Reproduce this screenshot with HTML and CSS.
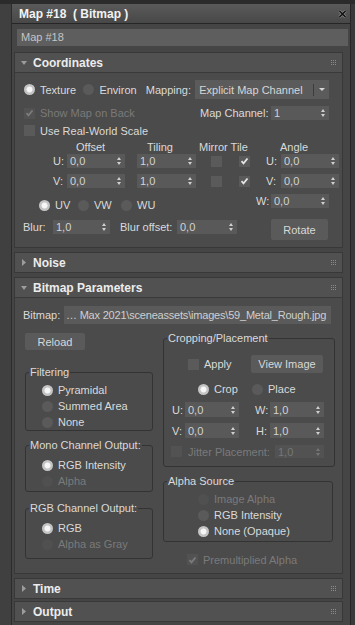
FILE: index.html
```html
<!doctype html>
<html lang="en">
<head>
    <meta charset="UTF-8">
    <meta name="viewport" content="width=device-width, initial-scale=1.0">
    <title>Map #18 ( Bitmap )</title>
    <link rel="stylesheet" href="styles.css">
</head>
<body>
<div class="topline"></div>
<div class="desk">
    <div class="side"></div>
    <div class="win">
        <!-- title bar -->
        <div class="title">
            <span>Map #18&nbsp; ( Bitmap )</span>
            <svg class="close" width="9" height="8" viewBox="0 0 9 8">
                <path d="M1.5 1 L7.5 7 M7.5 1 L1.5 7" stroke="#8a8a8a" stroke-width="3"/>
                <path d="M1.5 1 L7.5 7 M7.5 1 L1.5 7" stroke="#111" stroke-width="1.6"/>
            </svg>
        </div>
        <div class="name">Map #18</div>

        <div class="rollouts">
            <div class="rolls">

                <!-- Coordinates -->
                <div class="roll">
                    <div class="roll-head">
                        <svg class="tri" width="6" height="4" viewBox="0 0 6 4"><polygon points="0,0 6,0 3,4" fill="#9c9c9c"/></svg>
                        <span class="roll-name">Coordinates</span>
                        <svg class="grip" width="5" height="5" viewBox="0 0 5 5" fill="#8c8c8c"><rect x="0" y="0" width="1" height="1"/><rect x="2" y="0" width="1" height="1"/><rect x="4" y="0" width="1" height="1"/><rect x="0" y="2" width="1" height="1"/><rect x="2" y="2" width="1" height="1"/><rect x="4" y="2" width="1" height="1"/><rect x="0" y="4" width="1" height="1"/><rect x="2" y="4" width="1" height="1"/><rect x="4" y="4" width="1" height="1"/></svg>
                    </div>
                    <div class="roll-body coords">
                        <div class="row row-a">
                            <div class="opt w-texture"><span class="radio on"></span>Texture</div>
                            <div class="opt w-environ"><span class="radio"></span>Environ</div>
                            <span class="lbl w-mapping">Mapping:</span>
                            <div class="drop">
                                <span>Explicit Map Channel</span>
                                <span class="drop-sep"></span>
                                <span class="drop-arr"></span>
                            </div>
                        </div>
                        <div class="row row-b">
                            <div class="opt w-showmap dis">
                                <span class="check dis"><svg width="9" height="8" viewBox="0 0 9 8"><polyline points="1.5,4.2 3.5,6.3 7.5,1.5" fill="none" stroke="#7c7c7c" stroke-width="1.8"/></svg></span>Show Map on Back
                            </div>
                            <span class="lbl w-mapch">Map Channel:</span>
                            <div class="spin w58"><span>1</span><span class="arr"></span></div>
                        </div>
                        <div class="row row-c">
                            <div class="opt"><span class="check"></span>Use Real-World Scale</div>
                        </div>
                        <div class="row row-d">
                            <span class="w-offset">Offset</span>
                            <span class="w-tiling">Tiling</span>
                            <span class="w-mirror">Mirror Tile</span>
                            <span>Angle</span>
                        </div>
                        <div class="row row-uv">
                            <span class="axis">U:</span>
                            <div class="spin w58"><span>0,0</span><span class="arr"></span></div>
                            <div class="spin w59 ml12"><span>1,0</span><span class="arr"></span></div>
                            <span class="check ml15"></span>
                            <span class="check ml12"><svg width="9" height="8" viewBox="0 0 9 8"><polyline points="1.5,4.2 3.5,6.3 7.5,1.5" fill="none" stroke="#e4e4e4" stroke-width="1.8"/></svg></span>
                            <span class="axis ml11 w15">U:</span>
                            <div class="spin w58"><span>0,0</span><span class="arr"></span></div>
                        </div>
                        <div class="row row-uv mt6">
                            <span class="axis">V:</span>
                            <div class="spin w58"><span>0,0</span><span class="arr"></span></div>
                            <div class="spin w59 ml12"><span>1,0</span><span class="arr"></span></div>
                            <span class="check ml15"></span>
                            <span class="check ml12"><svg width="9" height="8" viewBox="0 0 9 8"><polyline points="1.5,4.2 3.5,6.3 7.5,1.5" fill="none" stroke="#e4e4e4" stroke-width="1.8"/></svg></span>
                            <span class="axis ml11 w15">V:</span>
                            <div class="spin w58"><span>0,0</span><span class="arr"></span></div>
                        </div>
                        <div class="row row-g">
                            <div class="opt low w-uv"><span class="radio on"></span>UV</div>
                            <div class="opt low w-vw"><span class="radio"></span>VW</div>
                            <div class="opt low"><span class="radio"></span>WU</div>
                            <div class="wgroup">
                                <span class="axis w15">W:</span>
                                <div class="spin w58"><span>0,0</span><span class="arr"></span></div>
                            </div>
                        </div>
                        <div class="row row-h">
                            <span class="lbl w-blur">Blur:</span>
                            <div class="spin w57 mt1"><span>1,0</span><span class="arr"></span></div>
                            <span class="lbl w-bluroff">Blur offset:</span>
                            <div class="spin w60 mt1"><span>0,0</span><span class="arr"></span></div>
                            <div class="btn rotate">Rotate</div>
                        </div>
                    </div>
                </div>

                <!-- Noise -->
                <div class="roll">
                    <div class="roll-head">
                        <svg class="tri" width="6" height="7" viewBox="0 0 6 7"><polygon points="1,0 5,3.5 1,7" fill="#9c9c9c"/></svg>
                        <span class="roll-name">Noise</span>
                        <svg class="grip" width="5" height="5" viewBox="0 0 5 5" fill="#8c8c8c"><rect x="0" y="0" width="1" height="1"/><rect x="2" y="0" width="1" height="1"/><rect x="4" y="0" width="1" height="1"/><rect x="0" y="2" width="1" height="1"/><rect x="2" y="2" width="1" height="1"/><rect x="4" y="2" width="1" height="1"/><rect x="0" y="4" width="1" height="1"/><rect x="2" y="4" width="1" height="1"/><rect x="4" y="4" width="1" height="1"/></svg>
                    </div>
                </div>

                <!-- Bitmap Parameters -->
                <div class="roll">
                    <div class="roll-head">
                        <svg class="tri" width="6" height="4" viewBox="0 0 6 4"><polygon points="0,0 6,0 3,4" fill="#9c9c9c"/></svg>
                        <span class="roll-name">Bitmap Parameters</span>
                        <svg class="grip" width="5" height="5" viewBox="0 0 5 5" fill="#8c8c8c"><rect x="0" y="0" width="1" height="1"/><rect x="2" y="0" width="1" height="1"/><rect x="4" y="0" width="1" height="1"/><rect x="0" y="2" width="1" height="1"/><rect x="2" y="2" width="1" height="1"/><rect x="4" y="2" width="1" height="1"/><rect x="0" y="4" width="1" height="1"/><rect x="2" y="4" width="1" height="1"/><rect x="4" y="4" width="1" height="1"/></svg>
                    </div>
                    <div class="roll-body bitmap">
                        <div class="row row-file">
                            <span class="lbl w-bitmap">Bitmap:</span>
                            <div class="file">… Max 2021\sceneassets\images\59_Metal_Rough.jpg</div>
                        </div>
                        <div class="cols">
                            <div class="col-left">
                                <div class="btn reload">Reload</div>
                                <fieldset class="group filtering">
                                    <legend>Filtering</legend>
                                    <div class="opt line"><span class="radio on"></span>Pyramidal</div>
                                    <div class="opt line"><span class="radio"></span>Summed Area</div>
                                    <div class="opt line"><span class="radio"></span>None</div>
                                </fieldset>
                                <fieldset class="group mono">
                                    <legend>Mono Channel Output:</legend>
                                    <div class="opt line"><span class="radio on"></span>RGB Intensity</div>
                                    <div class="opt line dis"><span class="radio dis"></span>Alpha</div>
                                </fieldset>
                                <fieldset class="group rgb">
                                    <legend>RGB Channel Output:</legend>
                                    <div class="opt line"><span class="radio on"></span>RGB</div>
                                    <div class="opt line dis"><span class="radio dis"></span>Alpha as Gray</div>
                                </fieldset>
                            </div>
                            <div class="col-right">
                                <fieldset class="group crop">
                                    <legend>Cropping/Placement</legend>
                                    <div class="row row-apply">
                                        <div class="opt w-apply"><span class="check"></span>Apply</div>
                                        <div class="btn view">View Image</div>
                                    </div>
                                    <div class="row row-crop">
                                        <div class="opt w-crop"><span class="radio on"></span>Crop</div>
                                        <div class="opt"><span class="radio"></span>Place</div>
                                    </div>
                                    <div class="row row-cuv">
                                        <span class="axis small w13">U:</span>
                                        <div class="spin w54 h15"><span>0,0</span><span class="arr"></span></div>
                                        <span class="axis small w15 ml16">W:</span>
                                        <div class="spin w54 h15"><span>1,0</span><span class="arr"></span></div>
                                    </div>
                                    <div class="row row-cuv mt6">
                                        <span class="axis small w13">V:</span>
                                        <div class="spin w54 h15"><span>0,0</span><span class="arr"></span></div>
                                        <span class="axis small w15 ml16">H:</span>
                                        <div class="spin w54 h15"><span>1,0</span><span class="arr"></span></div>
                                    </div>
                                    <div class="row row-jitter">
                                        <span class="check dis"></span>
                                        <span class="lbl dis w-jitter">Jitter Placement:</span>
                                        <div class="spin dis w49 h13"><span>1,0</span><span class="arr"></span></div>
                                    </div>
                                </fieldset>
                                <fieldset class="group alpha">
                                    <legend>Alpha Source</legend>
                                    <div class="opt line dis"><span class="radio dis"></span>Image Alpha</div>
                                    <div class="opt line"><span class="radio"></span>RGB Intensity</div>
                                    <div class="opt line"><span class="radio on"></span>None (Opaque)</div>
                                </fieldset>
                                <div class="row row-premult">
                                    <div class="opt dis">
                                        <span class="check dis"><svg width="9" height="8" viewBox="0 0 9 8"><polyline points="1.5,4.2 3.5,6.3 7.5,1.5" fill="none" stroke="#7c7c7c" stroke-width="1.8"/></svg></span>Premultiplied Alpha
                                    </div>
                                </div>
                            </div>
                        </div>
                    </div>
                </div>

                <!-- Time -->
                <div class="roll short">
                    <div class="roll-head">
                        <svg class="tri" width="6" height="7" viewBox="0 0 6 7"><polygon points="1,0 5,3.5 1,7" fill="#9c9c9c"/></svg>
                        <span class="roll-name">Time</span>
                        <svg class="grip" width="5" height="5" viewBox="0 0 5 5" fill="#8c8c8c"><rect x="0" y="0" width="1" height="1"/><rect x="2" y="0" width="1" height="1"/><rect x="4" y="0" width="1" height="1"/><rect x="0" y="2" width="1" height="1"/><rect x="2" y="2" width="1" height="1"/><rect x="4" y="2" width="1" height="1"/><rect x="0" y="4" width="1" height="1"/><rect x="2" y="4" width="1" height="1"/><rect x="4" y="4" width="1" height="1"/></svg>
                    </div>
                </div>

                <!-- Output -->
                <div class="roll">
                    <div class="roll-head">
                        <svg class="tri" width="6" height="7" viewBox="0 0 6 7"><polygon points="1,0 5,3.5 1,7" fill="#9c9c9c"/></svg>
                        <span class="roll-name">Output</span>
                        <svg class="grip" width="5" height="5" viewBox="0 0 5 5" fill="#8c8c8c"><rect x="0" y="0" width="1" height="1"/><rect x="2" y="0" width="1" height="1"/><rect x="4" y="0" width="1" height="1"/><rect x="0" y="2" width="1" height="1"/><rect x="2" y="2" width="1" height="1"/><rect x="4" y="2" width="1" height="1"/><rect x="0" y="4" width="1" height="1"/><rect x="2" y="4" width="1" height="1"/><rect x="4" y="4" width="1" height="1"/></svg>
                    </div>
                </div>

            </div>
        </div>
    </div>
    <div class="side-r"></div>
</div>
</body>
</html>
```

FILE: styles.css
```css
* {
    margin: 0;
    padding: 0;
    box-sizing: border-box;
}

body {
    width: 355px;
    height: 625px;
    overflow: hidden;
    background: #3c3c3c;
    font: 11px "Liberation Sans", Arial, sans-serif;
    color: #dadada;
}

.topline {
    height: 4px;
    background: #2b2b2b;
}

.desk {
    display: flex;
    height: 621px;
}

.side {
    width: 12px;
    background: #404040;
    border-right: 1px solid #2c2c2c;
}

.side-r {
    width: 5px;
    background: #3a3a3a;
    border-left: 1px solid #262626;
}

.win {
    width: 338px;
    background: #454545;
}

/* title bar */
.title {
    height: 20px;
    display: flex;
    align-items: center;
    padding-left: 7px;
    background: linear-gradient(#5a5a5a, #484848);
    border-bottom: 1px solid #262626;
    font-weight: bold;
    font-size: 12px;
    color: #f2f2f2;
}

.title .close {
    margin-left: auto;
    margin-right: 3px;
}

.name {
    margin: 5px 0 0 5px;
    width: 331px;
    height: 17px;
    line-height: 17px;
    padding-left: 4px;
    background: #5e5e5e;
    color: #c4c4c4;
}

/* rollouts */
.rollouts {
    display: flex;
    margin-top: 6px;
    padding-left: 2px;
}

.rolls {
    width: 329px;
}

.roll {
    border: 1px solid #383838;
    background: #4b4b4b;
    margin-bottom: 4px;
}

.roll.short {
    margin-bottom: 2px;
}

.roll-head {
    height: 19px;
    display: flex;
    align-items: center;
    padding-left: 6px;
    background: #515151;
    font-weight: bold;
    font-size: 12px;
    color: #ececec;
}

.roll-name {
    margin-left: 6px;
}

.roll-head .grip {
    margin-left: auto;
    margin-right: 6px;
}

.roll-body {
    border-top: 1px solid #3a3a3a;
}

/* shared controls */
.row {
    display: flex;
    align-items: center;
}

.opt {
    display: flex;
    align-items: center;
    white-space: nowrap;
}

.dis {
    color: #7a7a7a;
}

.lbl {
    white-space: nowrap;
}

.radio {
    width: 11px;
    height: 11px;
    border-radius: 50%;
    background: #5a5a5a;
    margin-right: 5px;
    flex: none;
}

.radio.on {
    background: radial-gradient(circle, #f6f6f6 0 2.6px, #c4c4c4 3.4px);
}

.radio.dis {
    background: #505050;
}

.check {
    width: 11px;
    height: 11px;
    background: #5a5a5a;
    margin-right: 5px;
    flex: none;
    display: flex;
    align-items: center;
    justify-content: center;
}

.check.dis {
    background: #525252;
}

.spin {
    display: flex;
    align-items: center;
    height: 14px;
    padding-left: 3px;
    background: #595959;
    color: #d2d2d2;
    flex: none;
}

.spin.dis {
    background: #525252;
    color: #767676;
}

.arr {
    display: flex;
    flex-direction: column;
    gap: 2px;
    margin-left: auto;
    margin-right: 4px;
}

.arr::before,
.arr::after {
    content: "";
    border-left: 2.5px solid transparent;
    border-right: 2.5px solid transparent;
}

.arr::before {
    border-bottom: 3px solid #d0d0d0;
}

.arr::after {
    border-top: 3px solid #d0d0d0;
}

.spin.dis .arr::before {
    border-bottom-color: #767676;
}

.spin.dis .arr::after {
    border-top-color: #767676;
}

.btn {
    display: flex;
    align-items: center;
    justify-content: center;
    background: #5a5a5a;
    border-radius: 2px;
    color: #d8d8d8;
    flex: none;
}

.axis {
    width: 14px;
    text-align: right;
    padding-right: 5px;
    flex: none;
}

.axis.small {
    padding-right: 3px;
}

.w13 { width: 13px; }
.w15 { width: 15px; }
.w49 { width: 49px; }
.w54 { width: 54px; }
.w57 { width: 57px; }
.w58 { width: 58px; }
.w59 { width: 59px; }
.w60 { width: 60px; }
.h13 { height: 13px; }
.h15 { height: 15px; }
.ml11 { margin-left: 11px; }
.ml12 { margin-left: 12px; }
.ml15 { margin-left: 15px; }
.ml16 { margin-left: 16px; }
.mt1 { margin-top: 1px; }
.mt6 { margin-top: 6px; }

/* coordinates */
.coords {
    padding: 7px 13px 7px 0;
}

.row-a {
    height: 19px;
    padding-left: 9px;
}

.w-texture { width: 60px; }
.w-environ { width: 63px; }
.w-mapping { width: 50px; }

.drop {
    width: 135px;
    height: 19px;
    display: flex;
    align-items: center;
    padding-left: 4px;
    background: #5b5b5b;
    color: #d6d6d6;
}

.drop-sep {
    margin-left: auto;
    width: 1px;
    height: 12px;
    background: #3c3c3c;
}

.drop-arr {
    margin: 0 4px 0 5px;
    border-left: 3px solid transparent;
    border-right: 3px solid transparent;
    border-top: 3px solid #d6d6d6;
}

.row-b {
    height: 14px;
    margin-top: 7px;
    padding-left: 9px;
}

.w-showmap { width: 176px; }
.w-mapch { width: 71px; }

.row-c {
    height: 13px;
    margin-top: 4px;
    padding-left: 9px;
}

.row-d {
    height: 13px;
    margin-top: 3px;
    padding-left: 61px;
}

.w-offset { width: 71px; }
.w-tiling { width: 52px; }
.w-mirror { width: 81px; }

.row-uv {
    height: 14px;
    margin-top: 1px;
    padding-left: 38px;
}

.row-uv.mt6 {
    margin-top: 6px;
}

.row-g {
    height: 17px;
    margin-top: 6px;
    padding-left: 24px;
    align-items: flex-start;
}

.opt.low {
    align-self: flex-end;
}

.w-uv { width: 39px; }
.w-vw { width: 43px; }

.wgroup {
    display: flex;
    align-items: center;
    margin-left: auto;
    height: 14px;
}

.row-h {
    height: 21px;
    margin-top: 8px;
    padding-left: 8px;
    align-items: flex-start;
}

.row-h .lbl {
    height: 14px;
    line-height: 14px;
    margin-top: 1px;
}

.w-blur { width: 30px; }

.w-bluroff {
    width: 57px;
    margin-left: 10px;
}

.rotate {
    width: 57px;
    height: 21px;
    margin-left: 34px;
}

/* bitmap parameters */
.bitmap {
    padding: 8px 0 7px;
}

.row-file {
    height: 18px;
    padding-left: 8px;
}

.w-bitmap { width: 41px; }

.file {
    width: 267px;
    height: 18px;
    line-height: 18px;
    padding-left: 2px;
    background: #5a5a5a;
    color: #cfcfcf;
    white-space: nowrap;
    overflow: hidden;
    letter-spacing: -0.2px;
}

.cols {
    display: flex;
    gap: 10px;
    padding-left: 10px;
}

.col-left {
    width: 128px;
}

.col-right {
    width: 172px;
}

.reload {
    width: 60px;
    height: 17px;
    margin-top: 9px;
}

.group {
    border: 1px solid #333333;
    border-radius: 3px;
}

.group legend {
    margin-left: 3px;
    padding: 0 1px;
    line-height: 13px;
    color: #dadada;
}

.opt.line {
    height: 16px;
    padding-left: 16px;
}

.filtering {
    margin-top: 16px;
    padding-top: 3px;
}

.mono {
    margin-top: 8px;
    padding: 5px 0 2px;
}

.rgb {
    margin-top: 10px;
    padding: 5px 0 6px;
}

.crop {
    margin-top: 8px;
    padding-bottom: 8px;
}

.row-apply {
    height: 18px;
    margin-top: 10px;
    padding-left: 24px;
}

.w-apply {
    width: 63px;
}

.view {
    width: 72px;
    height: 18px;
}

.row-crop {
    height: 16px;
    margin-top: 8px;
    padding-left: 34px;
}

.w-crop { width: 54px; }

.row-cuv {
    height: 15px;
    margin-top: 5px;
    padding-left: 8px;
}

.row-cuv.mt6 {
    margin-top: 6px;
}

.row-jitter {
    height: 13px;
    margin-top: 7px;
    padding-left: 7px;
}

.row-jitter .check {
    margin-right: 6px;
}

.w-jitter { width: 87px; }

.alpha {
    width: 170px;
    margin-top: 8px;
    padding: 3px 0 2px;
}

.alpha .opt.line {
    padding-left: 34px;
}

.row-premult {
    height: 13px;
    margin-top: 11px;
    padding-left: 24px;
}
```
